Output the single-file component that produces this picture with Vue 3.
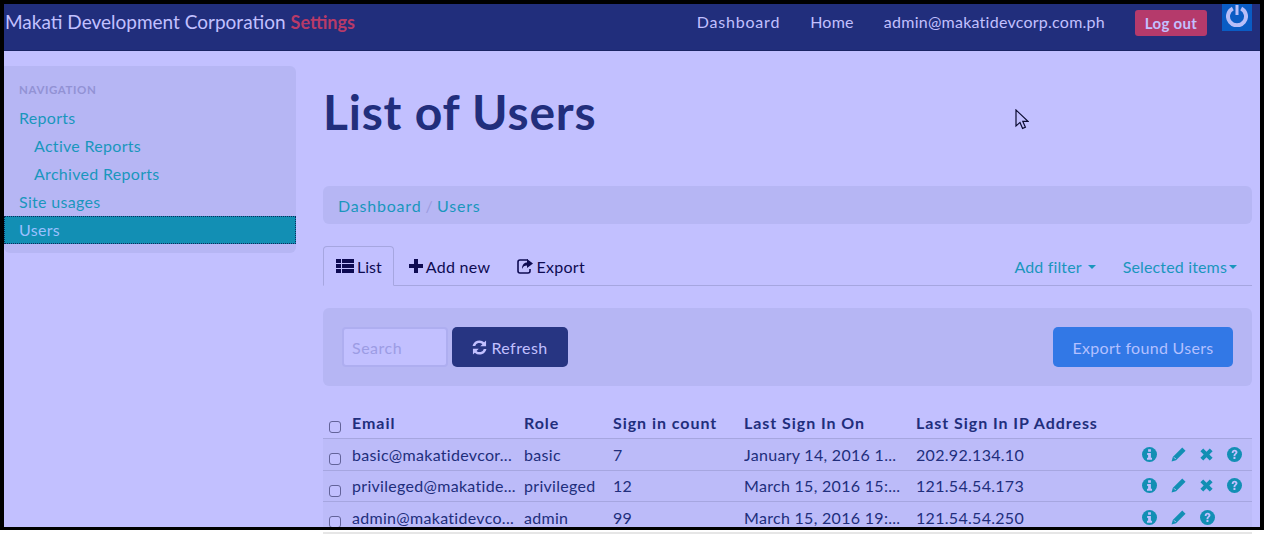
<template>
  <div class="shot">
    <div class="screen">
      <nav class="topbar">
        <div class="brand">
          <a class="brand-name">Makati Development Corporation</a>
          <span class="brand-sub">Settings</span>
        </div>
        <div class="top-links">
          <a class="wide">Dashboard</a>
          <a>Home</a>
          <a>admin@makatidevcorp.com.ph</a>
          <button class="logout">Log out</button>
          <div class="power">
            <svg viewBox="0 0 22 22" width="22" height="22">
              <path d="M6.800 3.400a9 9 0 1 0 8.400 0" fill="none" stroke="#b8bef8" stroke-width="4" />
              <rect x="9.500" y="0" width="3" height="10" fill="#b8bef8" />
            </svg>
          </div>
        </div>
      </nav>

      <div class="body-row">
        <aside class="sidebar">
          <div class="nav-header">NAVIGATION</div>
          <a class="nav-item">Reports</a>
          <a class="nav-item sub">Active Reports</a>
          <a class="nav-item sub">Archived Reports</a>
          <a class="nav-item">Site usages</a>
          <a class="nav-item active">Users</a>
        </aside>

        <main class="content">
          <h1>List of Users</h1>

          <div class="breadcrumb">
            <a class="wide">Dashboard</a>
            <span class="sep">/</span>
            <a class="wide">Users</a>
          </div>

          <div class="tabs">
            <a class="tab current">
              <svg class="ic" viewBox="0 0 18 14" width="18" height="14"><path d="M0 0h5v4H0zM6 0h12v4H6zM0 5h5v4H0zM6 5h12v4H6zM0 10h5v4H0zM6 10h12v4H6z" fill="#0e0b52" /></svg>
              List
            </a>
            <a class="tab">
              <svg class="ic" viewBox="0 0 14 14" width="14" height="14"><path d="M5 0h4v5h5v4H9v5H5V9H0V5h5z" fill="#0e0b52" /></svg>
              Add new
            </a>
            <a class="tab">
              <svg class="ic" viewBox="0 0 16 15" width="16" height="15"><path d="M11 1H3a2 2 0 0 0-2 2v9a2 2 0 0 0 2 2h8a2 2 0 0 0 2-2v-2" fill="none" stroke="#0e0b52" stroke-width="1.6" /><path d="M10 0l6 4.500-6 4.500V6.500C7.500 6.500 6 7.500 5 10c0-4 2-6.500 5-6.500z" fill="#0e0b52" /></svg>
              Export
            </a>
            <div class="tab-right">
              <a>Add filter <i class="caret"></i></a>
              <a>Selected items<i class="caret"></i></a>
            </div>
          </div>

          <div class="well">
            <input class="search" placeholder="Search" />
            <button class="refresh">
              <svg viewBox="0 0 16 16" width="15" height="15"><path d="M15 .5v6.200H8.800l2.300-2.300A4.700 4.700 0 0 0 3.400 6.500H.6A7.500 7.500 0 0 1 13 2.500zM1 15.500V9.300h6.200l-2.300 2.300a4.700 4.700 0 0 0 7.700-2.100h2.800A7.500 7.500 0 0 1 3 13.500z" fill="#c2c0ff" /></svg>
              Refresh
            </button>
            <button class="export-found">Export found Users</button>
          </div>

          <table class="users">
            <thead>
              <tr>
                <th class="c-check"><i class="box"></i></th>
                <th class="c-email">Email</th>
                <th class="c-role">Role</th>
                <th class="c-count">Sign in count</th>
                <th class="c-date">Last Sign In On</th>
                <th class="c-ip">Last Sign In IP Address</th>
                <th></th>
              </tr>
            </thead>
            <tbody>
              <tr v-for="u in users" :key="u.email">
                <td class="c-check"><i class="box"></i></td>
                <td>{{ u.email }}</td>
                <td>{{ u.role }}</td>
                <td>{{ u.count }}</td>
                <td>{{ u.date }}</td>
                <td>{{ u.ip }}</td>
                <td>
                  <div class="actions">
                    <svg class="act" viewBox="0 0 16 16"><circle cx="8" cy="8" r="8" /><path d="M6.500 2.500h3v2.500h-3zM5.500 6.500h4v5h1.200v2H5.300v-2h1.200v-3h-1z" fill="#c2c0ff" /></svg>
                    <svg class="act" viewBox="0 0 16 16"><path d="M12 .5l3.500 3.500L5.400 14.100.6 15.400l1.300-4.800z" /><path d="M3.200 11l1.800 1.800" stroke="#c2c0ff" stroke-width="1" /></svg>
                    <svg v-if="u.remove" class="act small" viewBox="0 0 16 16"><path d="M.5 4l3.500-3.500L8 4.500l4-4L15.500 4l-4 4 4 4-3.500 3.500-4-4-4 4L.5 12l4-4z" /></svg>
                    <svg class="act" viewBox="0 0 16 16"><circle cx="8" cy="8" r="8" /><path d="M5 6.300C5 4.200 6.500 3 8.200 3c1.700 0 3 1.100 3 2.700 0 2-2.300 2.100-2.300 3.800H6.900c0-2.600 2.200-2.700 2.200-3.700 0-.6-.4-1-1-1-.7 0-1 .5-1.100 1.500zM6.900 10.500h2.100v2.300H6.900z" fill="#c2c0ff" /></svg>
                  </div>
                </td>
              </tr>
            </tbody>
          </table>
        </main>
      </div>

      <svg class="cursor" viewBox="0 0 14 21" width="14" height="21"><path d="M1 1v16l4-3.600 2.600 6 2.800-1.200-2.600-5.800h5.200z" fill="#c2c0ff" stroke="#0a0a30" stroke-width="1.200" /></svg>
    </div>
    <div class="under"></div>
  </div>
</template>

<script setup>
const users = [
  { email: 'basic@makatidevcor...', role: 'basic', count: 7, date: 'January 14, 2016 1...', ip: '202.92.134.10', remove: true },
  { email: 'privileged@makatide...', role: 'privileged', count: 12, date: 'March 15, 2016 15:...', ip: '121.54.54.173', remove: true },
  { email: 'admin@makatidevco...', role: 'admin', count: 99, date: 'March 15, 2016 19:...', ip: '121.54.54.250', remove: false }
]
</script>

<style>
html, body {
  margin: 0;
  background: #fff;
}
</style>

<style scoped>
.shot {
  width: 1264px;
  height: 534px;
  overflow: hidden;
  font-family: "Lato", "Open Sans", sans-serif;
  font-size: 16px;
  letter-spacing: 0.3px;
  background: #fff;
}
.screen {
  position: relative;
  box-sizing: border-box;
  height: 530px;
  border: 4px solid #000;
  border-bottom-width: 3px;
  background: #c2c0ff;
  overflow: hidden;
}
.topbar {
  height: 47px;
  box-sizing: border-box;
  background: #212e7c;
  border-bottom: 1px solid #1a2464;
  display: flex;
  justify-content: space-between;
  color: #c2c0ff;
}
.brand {
  display: flex;
  align-items: baseline;
  padding: 6px 0 0 1px;
  font-size: 19px;
  letter-spacing: 0;
  gap: 5px;
}
.brand-sub {
  color: #b83a68;
  font-size: 18px;
  font-weight: 700;
}
.top-links {
  display: flex;
  align-items: flex-start;
  padding-right: 8px;
  letter-spacing: 0.25px;
}
.top-links a {
  margin: 8px 30px 0 0;
}
.top-links .wide,
.breadcrumb .wide {
  letter-spacing: 0.8px;
}
.logout {
  margin: 6px 15px 0 0;
  height: 26px;
  width: 72px;
  padding: 0;
  border: none;
  border-radius: 3px;
  background: #b53a6b;
  color: #c2c0ff;
  font: 700 15px "Lato", sans-serif;
  letter-spacing: 0.3px;
}
.power {
  width: 30px;
  height: 27px;
  box-sizing: border-box;
  padding-top: 1px;
  background: #0a5cc4;
  display: flex;
  justify-content: center;
}
.body-row {
  display: flex;
  align-items: flex-start;
}
.sidebar {
  width: 292px;
  flex-shrink: 0;
  margin-top: 15px;
  padding: 16px 0 9px;
  box-sizing: border-box;
  background: #b6b6f4;
  border-radius: 0 6px 6px 6px;
}
.nav-header {
  padding-left: 15px;
  font-size: 11.500px;
  font-weight: 700;
  letter-spacing: 0.6px;
  color: #9292d4;
  height: 22px;
  line-height: 16px;
}
.nav-item {
  display: block;
  height: 28px;
  line-height: 28px;
  padding-left: 15px;
  color: #1a96bd;
}
.nav-item.sub {
  padding-left: 30px;
}
.nav-item.active {
  box-sizing: border-box;
  background: #128fb4;
  color: #9cc0ff;
  outline: 1px dotted #0a2a5c;
  outline-offset: -1px;
}
.content {
  flex: 1;
  padding: 0 8px 0 27px;
  min-width: 0;
}
h1 {
  margin: 31px 0 0;
  height: 104px;
  font-size: 48px;
  line-height: 60px;
  font-weight: 700;
  letter-spacing: 0.8px;
  color: #212e7c;
}
.breadcrumb {
  display: flex;
  gap: 4px;
  height: 38px;
  align-items: center;
  padding-left: 15px;
  background: #b6b6f4;
  border-radius: 6px;
  color: #1a96bd;
}
.sep {
  color: #9c9ce0;
}
.tabs {
  margin-top: 22px;
  display: flex;
  height: 40px;
  box-sizing: border-box;
  border-bottom: 1px solid #a6a6e0;
  color: #0e0b52;
}
.tab {
  display: flex;
  align-items: center;
  gap: 3px;
  height: 40px;
  box-sizing: border-box;
  padding: 0 11px 0 13px;
  border: 1px solid transparent;
  margin-right: 1px;
}
.tab.current {
  padding: 0 11px 0 12px;
  letter-spacing: 0;
  border-color: #a6a6e0;
  border-bottom-color: #c2c0ff;
  border-radius: 4px 4px 0 0;
}
.tab-right {
  margin-left: auto;
  display: flex;
  gap: 27px;
  padding: 11px 15px 0 0;
  color: #1a96bd;
  letter-spacing: 0.15px;
}
.caret {
  display: inline-block;
  width: 0;
  height: 0;
  margin: 0 0 3px 2px;
  vertical-align: middle;
  border-left: 4px solid transparent;
  border-right: 4px solid transparent;
  border-top: 4px solid #1a96bd;
}
.well {
  margin-top: 22px;
  height: 78px;
  box-sizing: border-box;
  display: flex;
  align-items: center;
  padding: 0 19px;
  background: #b6b6f4;
  border-radius: 6px;
}
.search {
  box-sizing: border-box;
  width: 106px;
  height: 40px;
  padding: 0 8px;
  border: 2px solid #aeaef0;
  border-radius: 4px;
  background: #c2c0ff;
  font: 16px "Lato", sans-serif;
  letter-spacing: 0.5px;
  outline: none;
}
.search::placeholder {
  color: #9c9ce4;
}
.refresh {
  margin-left: 4px;
  width: 116px;
  height: 40px;
  border: none;
  border-radius: 5px;
  background: #273582;
  color: #c2c0ff;
  font: 16px "Lato", sans-serif;
  letter-spacing: 0.4px;
  display: flex;
  align-items: center;
  justify-content: center;
  gap: 4px;
}
.export-found {
  margin-left: auto;
  width: 180px;
  height: 40px;
  border: none;
  border-radius: 5px;
  background: #3278e6;
  color: #b4c0ff;
  font: 16px "Lato", sans-serif;
  letter-spacing: 0.3px;
}
.users {
  margin-top: 20px;
  width: 929px;
  border-collapse: collapse;
  table-layout: fixed;
  color: #212e7c;
}
.users th {
  height: 32px;
  padding: 0;
  text-align: left;
  font-weight: 700;
  letter-spacing: 0.95px;
  border-bottom: 1px solid #a6a6e0;
}
.users td {
  height: 30.500px;
  padding: 0;
  background: #bcbbf9;
  border-bottom: 1px solid #a6a6e0;
  white-space: nowrap;
  overflow: hidden;
}
.c-check { width: 29px; }
.c-email { width: 172px; }
.c-role { width: 89px; }
.c-count { width: 131px; }
.c-date { width: 172px; }
.c-ip { width: 226px; }
.box {
  display: block;
  box-sizing: border-box;
  width: 12px;
  height: 12px;
  margin: 10px 0 0 6px;
  border: 1px solid #63639a;
  border-radius: 3px;
  background: #c2c0ff;
}
.actions {
  display: flex;
  align-items: center;
  gap: 14px;
}
.act {
  width: 15px;
  height: 15px;
  fill: #128fb4;
}
.act.small {
  width: 13px;
  height: 13px;
}
.cursor {
  position: absolute;
  left: 1011px;
  top: 105px;
}
.under {
  height: 2px;
  margin: 2px 0 0 323px;
  width: 929px;
  background: #e6e6e6;
}
</style>
